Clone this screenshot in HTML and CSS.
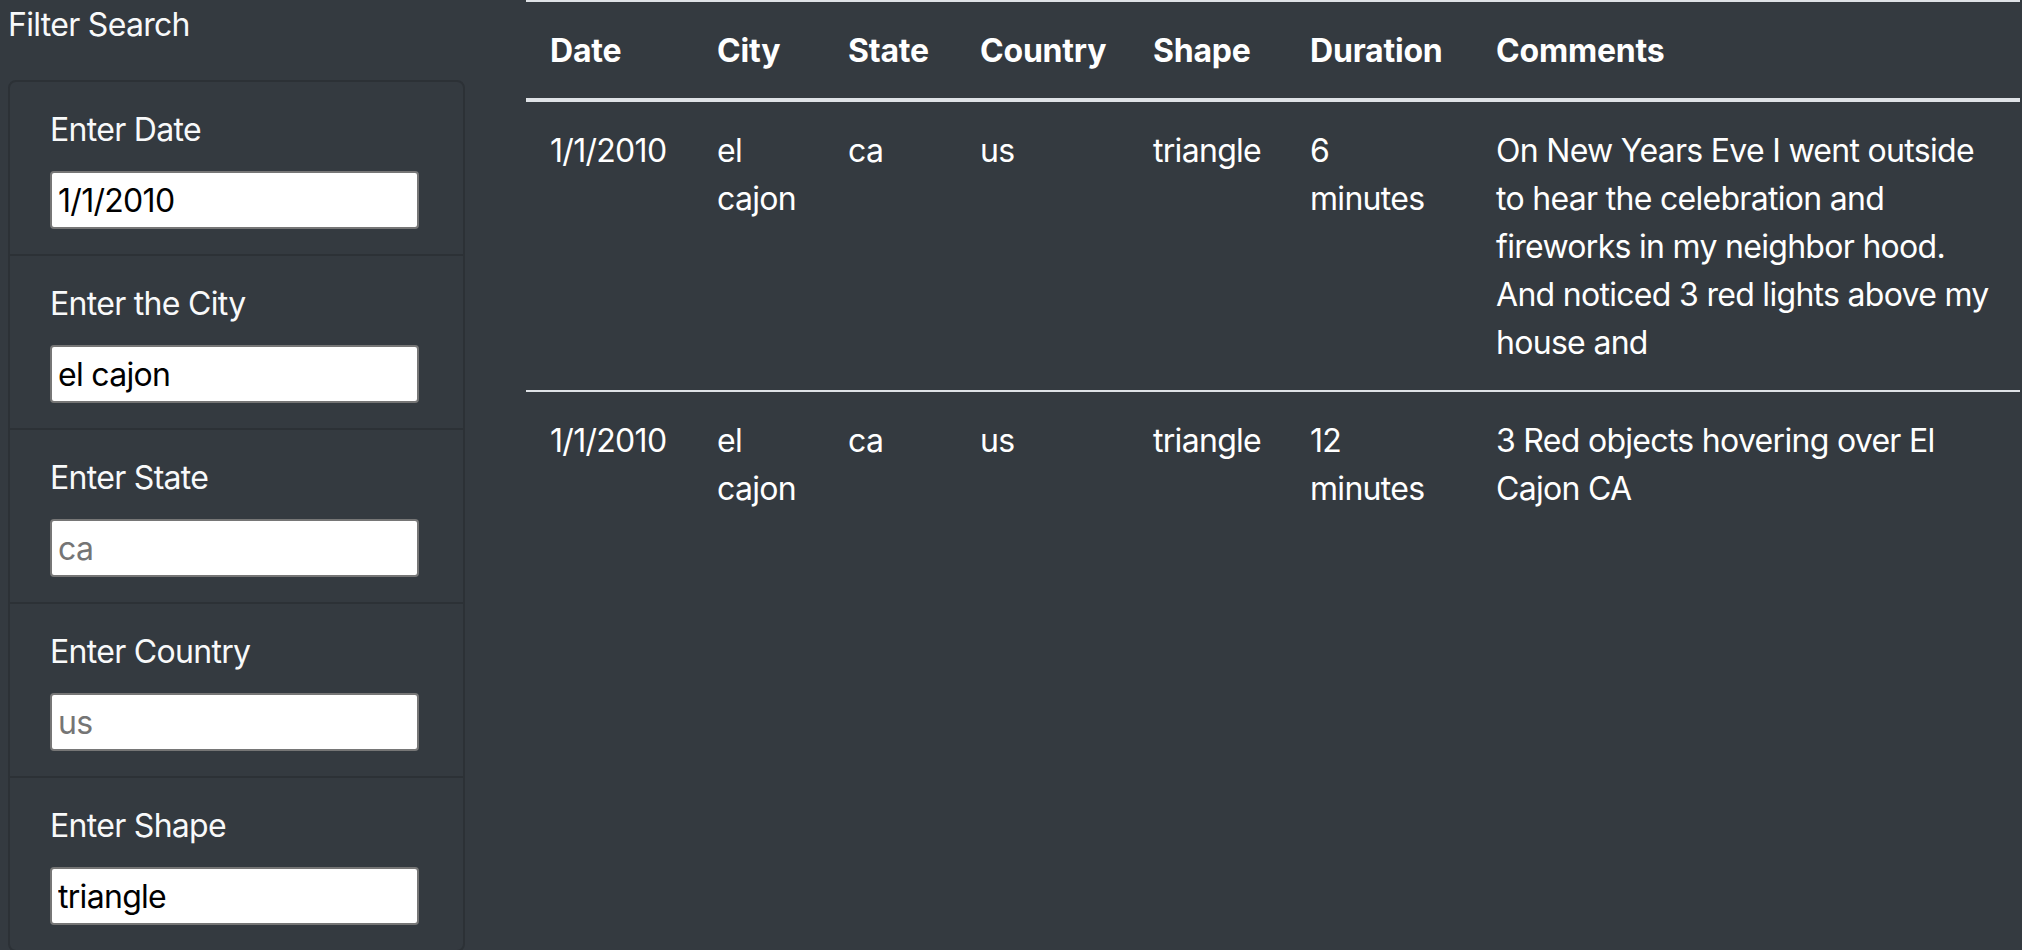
FILE: index.html
```html
<!DOCTYPE html>
<html lang="en">
<head>
<meta charset="utf-8">
<title>UFO Sightings</title>
<link rel="stylesheet" href="styles.css">
</head>
<body>
<div class="page">
  <aside class="sidebar">
    <div class="sidebar-title">Filter Search</div>
    <ul class="filters">
      <li class="filter">
        <label class="filter-label" for="datetime">Enter Date</label>
        <input class="filter-input" id="datetime" type="text" value="1/1/2010" placeholder="1/1/2010">
      </li>
      <li class="filter">
        <label class="filter-label" for="city">Enter the City</label>
        <input class="filter-input" id="city" type="text" value="el cajon" placeholder="roswell">
      </li>
      <li class="filter">
        <label class="filter-label" for="state">Enter State</label>
        <input class="filter-input" id="state" type="text" placeholder="ca">
      </li>
      <li class="filter">
        <label class="filter-label" for="country">Enter Country</label>
        <input class="filter-input" id="country" type="text" placeholder="us">
      </li>
      <li class="filter">
        <label class="filter-label" for="shape">Enter Shape</label>
        <input class="filter-input" id="shape" type="text" value="triangle" placeholder="circle">
      </li>
    </ul>
  </aside>
  <main class="results">
    <table class="ufo-table">
      <colgroup>
        <col class="c-date"><col class="c-city"><col class="c-state"><col class="c-country"><col class="c-shape"><col class="c-duration"><col class="c-comments">
      </colgroup>
      <thead>
        <tr>
          <th>Date</th><th>City</th><th>State</th><th>Country</th><th>Shape</th><th>Duration</th><th>Comments</th>
        </tr>
      </thead>
      <tbody>
        <tr>
          <td>1/1/2010</td><td>el cajon</td><td>ca</td><td>us</td><td>triangle</td><td>6 minutes</td>
          <td>On New Years Eve I went outside to hear the celebration and fireworks in my neighbor hood. And noticed 3 red lights above my house and</td>
        </tr>
        <tr>
          <td>1/1/2010</td><td>el cajon</td><td>ca</td><td>us</td><td>triangle</td><td>12 minutes</td>
          <td>3 Red objects hovering over El Cajon CA</td>
        </tr>
      </tbody>
    </table>
  </main>
</div>
</body>
</html>
```
FILE: styles.css
```css
html, body {
  margin: 0;
  padding: 0;
  background: #343a40;
  height: 100%;
  overflow: hidden;
}
body {
  font-family: Inter, "Noto Sans", "Liberation Sans", sans-serif;
  font-size: 32px;
  line-height: 48px;
  letter-spacing: -0.7px;
  color: #fff;
}
.page {
  display: flex;
  align-items: flex-start;
}
.sidebar {
  flex: 0 0 457px;
  margin-left: 8px;
}
.sidebar-title {
  height: 48px;
  padding-top: 1px;
  box-sizing: border-box;
  color: #f8f9fa;
}
.filters {
  list-style: none;
  margin: 32px 0 0;
  padding: 0;
  border: 2px solid #2c3136;
  border-radius: 8px;
}
.filter {
  padding: 24px 40px 25px;
  border-top: 2px solid #2c3136;
}
.filter:first-child {
  border-top: 0;
}
.filter-label {
  display: block;
  margin-bottom: 17px;
  color: #f8f9fa;
}
.filter-input {
  display: block;
  box-sizing: border-box;
  width: 369px;
  height: 58px;
  margin: 0;
  padding: 2px 4px 2px 6px;
  border: 2px solid #767676;
  border-radius: 4px;
  background: #fff;
  color: #000;
  font: inherit;
  letter-spacing: inherit;
  line-height: 50px;
}
.filter-input::placeholder {
  color: #757575;
}
.results {
  margin-left: 61px;
  width: 1494px;
}
.ufo-table {
  width: 100%;
  table-layout: fixed;
  border-collapse: collapse;
  color: #fff;
}
.c-date { width: 167px; }
.c-city { width: 131px; }
.c-state { width: 132px; }
.c-country { width: 173px; }
.c-shape { width: 157px; }
.c-duration { width: 186px; }
.ufo-table th,
.ufo-table td {
  padding: 25px 24px 23px;
  text-align: left;
  vertical-align: top;
  border-top: 2px solid #dee2e6;
}
.ufo-table th {
  font-weight: 700;
  letter-spacing: -0.2px;
  border-bottom: 4px solid #dee2e6;
}
```
